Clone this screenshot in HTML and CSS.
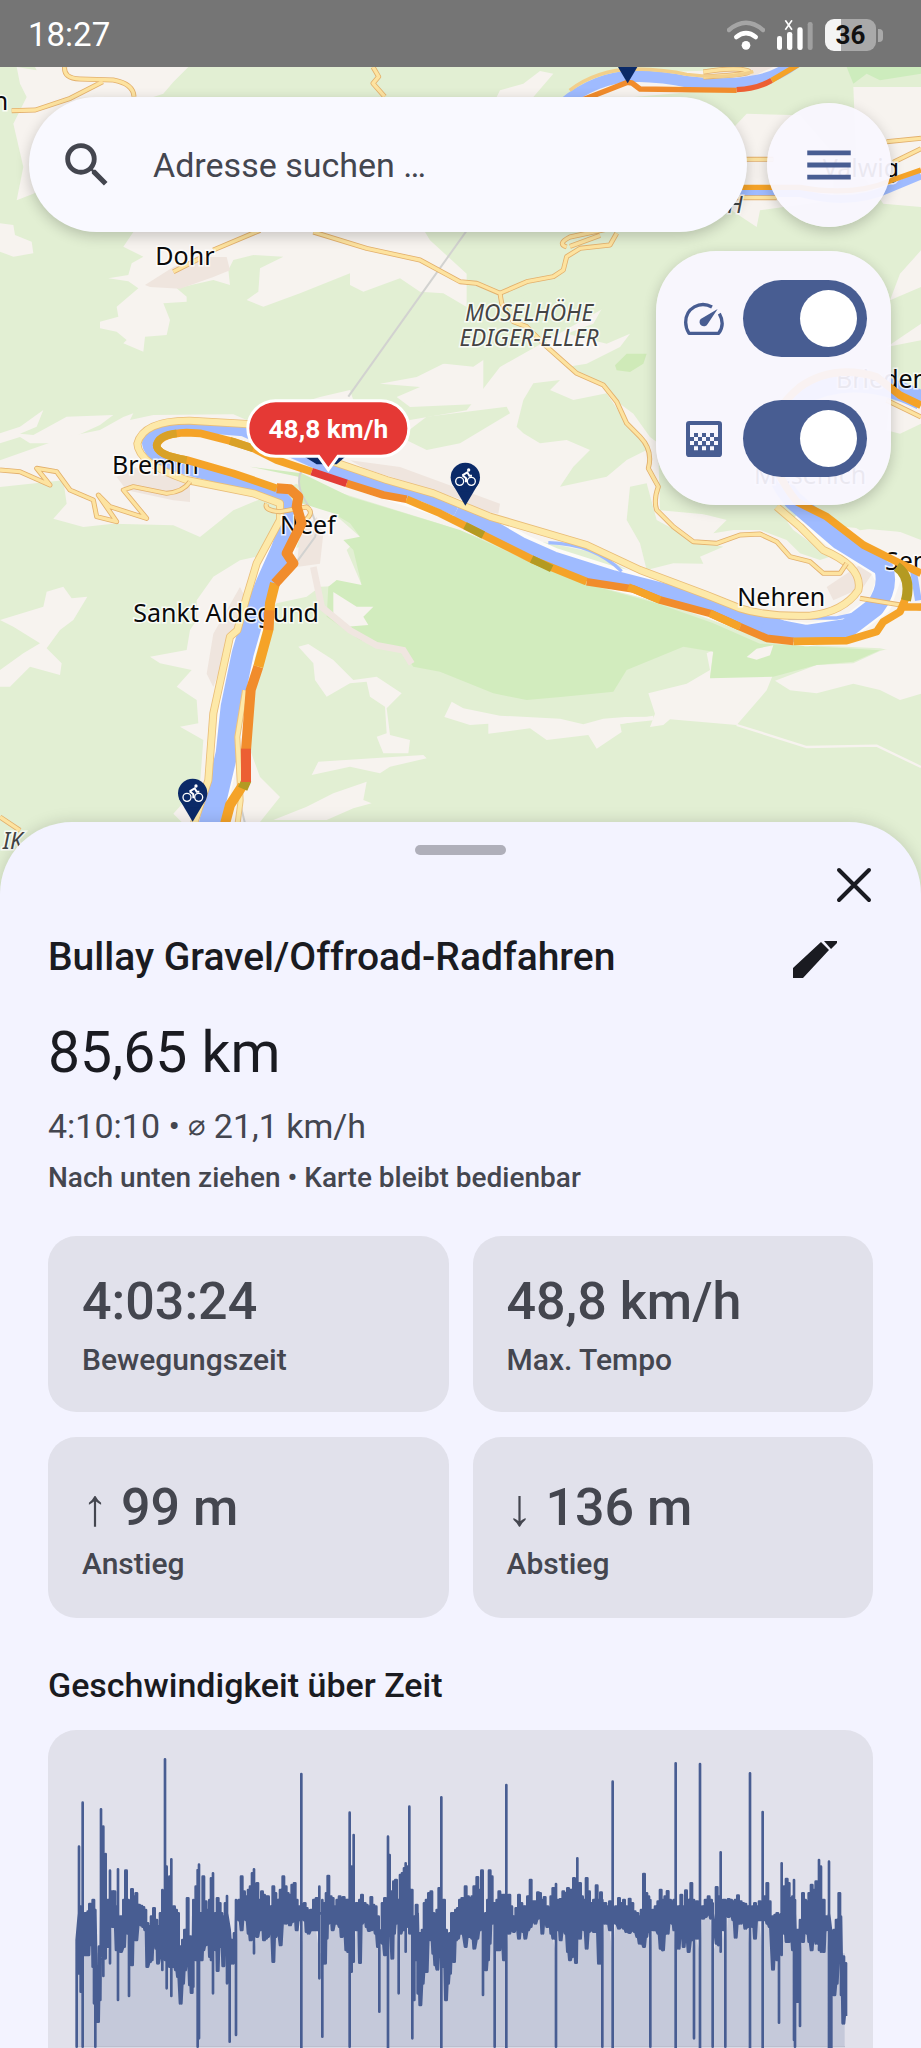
FILE: index.html
```html
<!DOCTYPE html>
<html lang="de">
<head>
  <meta charset="UTF-8" />
  <meta name="viewport" content="width=device-width, initial-scale=1.0"/>
  <title>Bullay Gravel/Offroad-Radfahren</title>
  <link rel="stylesheet" href="styles.css">
</head>
<body>
  <header class="status-bar">
    <span class="clock">18:27</span>
    <div class="status-icons">
      <svg class="wifi" viewBox="0 0 114 90" aria-hidden="true">
        <path d="M6 30Q57-13 108 30" fill="none" stroke="#a5a5a5" stroke-width="13" stroke-linecap="round"/>
        <path d="M28 51Q57 28 86 51" fill="none" stroke="#fff" stroke-width="14" stroke-linecap="round"/>
        <circle cx="57" cy="76" r="13" fill="#fff"/>
      </svg>
      <svg class="signal" viewBox="0 0 108 90" aria-hidden="true">
        <g fill="#fff"><rect x="0" y="48" width="15" height="42" rx="7"/><rect x="30" y="36" width="16" height="54" rx="7"/><rect x="61" y="22" width="16" height="68" rx="7"/></g>
        <rect x="92" y="6" width="15" height="84" rx="7" fill="#a0a0a0"/>
        <path d="M25 1L45 29M45 1L25 29" stroke="#fff" stroke-width="5"/>
      </svg>
      <span class="battery">36</span>
    </div>
  </header>

  <main class="screen">
    <section class="map" aria-label="Karte">
      <svg class="map-canvas" viewBox="0 0 2763 2514" preserveAspectRatio="xMidYMin slice" role="img" aria-label="Karte der Mosel bei Bremm">
        <defs>
          <g id="pin">
            <path d="M-40-68Q-30-50 0 0Q30-50 40-68Z"/>
            <circle cy="-85" r="44"/>
            <g fill="none" stroke="#fff" stroke-width="4">
              <circle cx="-17" cy="-73" r="12"/><circle cx="18" cy="-73" r="12"/>
              <path d="M-9-91L6-100L12-90H20M-9-91L2-82V-70" stroke-width="6"/>
            </g>
            <circle cx="10" cy="-107" r="5" fill="#fff"/>
          </g>
          <path id="main-road" d="M575 2290L625 2140L640 1939L690 1709L712 1690L740 1589L770 1489L840 1359L840 1309L760 1279L560 1239Q415 1190 412 1130Q430 1060 570 1061L740 1071L1000 1184L1160 1239L1300 1279L1470 1349L1760 1434L1920 1509L2120 1584L2220 1624Q2300 1650 2430 1646Q2530 1635 2575 1570Q2590 1500 2470 1449L2400 1379L2330 1319"/>
          <g id="roads">
            <path d="M940 495L1100 544L1260 579L1380 644L1430 649L1500 679L1505 709L1540 764L1580 779L1640 839L1730 919L1810 954L1850 1004L1880 1069L1920 1109Q1960 1150 1945 1204L1975 1259Q1960 1300 1970 1329L2020 1379L2080 1424L2150 1429L2220 1404L2280 1401L2330 1424L2370 1469L2430 1484L2470 1519H2520L2540 1489"/>
            <path d="M1500 679L1580 644L1660 629L1690 609L1700 569L1740 544L1830 534L1850 499M1700 540Q1670 530 1710 510L1850 480M1710 538L1800 505"/>
            <path d="M0 1209L60 1214L150 1254L110 1204L170 1214L210 1269L280 1299L290 1349L350 1364L295 1284L330 1319L440 1354L370 1269L400 1259L500 1279Q550 1275 570 1244"/>
            <path d="M194 0Q190 34 240 36L340 39Q400 50 402 89M308 44L211 94L106 129L35 131"/>
            <path d="M1119 0L1136 29L1119 49L1154 89"/>
            <path d="M640 549L780 490M520 614L600 574"/>
            <path d="M800 1310Q790 1330 840 1334L920 1320Q950 1340 900 1370"/>
            <path d="M2580 1594L2763 1624M2660 1000L2763 1050"/>
            <path d="M2230 277H2320M2660 224L2763 214M2680 286L2763 245M2200 392H2330"/>
            <path d="M2110 15Q2200 0 2240 10T2110 30M0 2250L60 2290"/>
          </g>
        </defs>

        <rect width="2763" height="2514" fill="#e2efd3"/>

        <!-- open fields -->
        <g fill="#f7f3ef">
          <path d="M50 0L110 10L105 0H565L520 45L490 80L460 90L420 140L340 230L100 380L50 400L70 300L40 170L80 90L60 50Z"/>
          <path d="M0 469L40 474L45 504L95 524L100 559L40 569L0 554Z"/>
          <path d="M1460 150L1500 70L1570 50L1620 12L1660 20L1600 90L1510 150Z"/>
          <path d="M1709 89L1790 40L1860 20L2150 10L2300 0H2360L2250 60L1900 90Z"/>
          <path d="M400 495L370 539L430 569L395 589L385 624L325 634L385 643L415 664L350 719L355 749L300 764V784L350 794L380 819L370 829L430 854L435 809L500 804L510 759L490 709L560 704V689L530 664L640 639L690 654L685 609L700 579L760 564L850 569L780 604L775 674L740 699L790 719L900 679L1050 619V654L1090 674L1200 634L1260 674L1330 679L1400 720L1400 620L1290 520L1260 470H420Z"/>
          <path d="M1140 950L1250 930L1330 890L1450 860V1010L1230 1020L1190 990L1260 960Z"/>
          <path d="M0 1099L60 1079L130 1029L110 1079L60 1100L100 1104L200 1049L340 1044L300 1074L180 1129H90L60 1110L0 1129Z"/>
          <path d="M200 1109L300 1089L370 1050L400 1039L390 1059L460 1044L700 1042L740 1059L960 990L1050 969L1060 1000L1230 1059L1400 1030L1500 900L1960 640L1980 1330L2763 1400V1770L2640 1744L2330 1730L2000 1610L1320 1370L900 1240V1440L720 1480L640 1529L590 1600V1660L570 1689L560 1749L450 1769L480 1789L575 1809L530 1859L590 1899L595 1969L540 1979L610 2019L600 2150L520 2240L560 2280L760 2290L840 2190L780 2130L740 2020L720 1700L830 1609L920 1589L960 1559L1085 1554L1040 1449L1080 1409L1000 1339L890 1250L700 1330L600 1410L520 1375L340 1370L250 1380L160 1355L200 1310L190 1240L0 1260V1180Z"/>
          <path d="M0 1659L130 1619L140 1574L190 1559L215 1594L262 1589L220 1659L180 1689L140 1744L185 1789L180 1824L90 1799L30 1859H0V1809L70 1759L120 1729L40 1679Z"/>
          <path d="M895 1739L925 1731L1000 1779L1060 1839L1130 1829L1205 1879L1160 1924L1170 2004L1230 2019L1225 2059L1150 2059L1130 2009L1160 1999L1155 1919L1110 1889L1100 1844L1050 1849L980 1889L945 1839L940 1789Z"/>
          <path d="M935 2124L955 2084L1270 2064L1280 2074L1170 2099L1140 2119L1050 2099Z"/>
          <path d="M820 2259L920 2219L1000 2179L1100 2144L1090 2199L1115 2209L1060 2224L980 2259Z"/>
          <path d="M1333 1950L1355 1904L1390 1924L1500 1946L1680 1955L1750 1972L1810 1955L1875 1950L1960 1949V1960L1860 1970L1865 1995L1790 2045L1765 2004L1640 2019L1590 1984L1465 2000L1465 1970L1410 1974Z"/>
          <path d="M1945 1879L2060 1850L2130 1809L2120 1759L2140 1749L2130 1830L2320 1820L2300 1870L2210 1974L2010 1957L1990 1974L1950 1980L1965 1940Z"/>
          <path d="M2325 1841L2450 1794L2560 1789L2640 1752L2763 1720V1880L2700 1899L2640 1869L2560 1850L2450 1879L2370 1870Z"/>
          <path d="M2060 330L2240 140L2400 145L2500 260V400L2280 430L2270 480L2210 440Z"/>
          <path d="M2560 60H2763V420L2650 410L2570 300Z"/>
          <path d="M2763 550L2700 620L2670 700L2763 660ZM2763 770L2660 840L2763 820Z"/>
          <path d="M2670 1000L2763 1010V1070L2700 1100L2660 1090Z"/>
        </g>
        <path d="M1860 1968L1960 1950M2210 1974L2420 2040L2630 2036L2763 2100" fill="none" stroke="#f7f3ef" stroke-width="7"/>

        <!-- woods between the fields -->
        <g fill="#e2efd3">
          <path d="M1520 699L1640 660L1980 630L1990 1140L1950 1110L1900 1040L1860 1010L1820 960L1740 930L1700 900L1760 890L1860 840L1890 800L1820 830L1700 800L1780 770L1820 700L1720 660L1600 690Z"/>
          <path d="M1300 790L1410 799L1540 859L1480 859L1420 899L1320 889L1250 850Z"/>
          <path d="M1570 999L1600 949L1680 939L1650 969L1720 999L1820 979L1860 1039L1920 1109L1940 1149L1880 1179L1820 1229L1680 1259L1720 1199L1770 1149L1700 1119L1620 1129L1570 1099L1550 1079Z"/>
          <path d="M1280 1049L1520 1019L1530 1039L1380 1129L1280 1149L1200 1110Z"/>
          <path d="M1970 1359L2080 1419L2170 1439L2100 1469L2110 1490L2020 1489L1940 1509L1920 1429L1880 1359L1890 1259L1940 1249Z"/>
          <path d="M2100 1309H2320L2380 1389L2490 1469L2460 1479L2400 1459L2360 1419L2280 1389L2200 1389L2140 1399L2180 1359L2100 1339Z"/>
          <path d="M2450 1314L2763 1110V1419L2660 1379L2580 1390Z"/>
          <path d="M1600 1420L1700 1439L1790 1459L1900 1519L1880 1530L1700 1489Z"/>
        </g>
        <path d="M1845 895L1880 860L1940 860L1930 890L1890 915L1850 910Z" fill="#cfeab8"/>
        <path d="M2540 0H2763V20L2640 40L2600 20L2560 50Z" fill="#cdecbd"/>

        <!-- nature reserve -->
        <path d="M750 1199L905 1219L1050 1289L1380 1389L1600 1489L1750 1549L1970 1609L2140 1669L2280 1730L2380 1735L2640 1750L2560 1784L2450 1794L2320 1829L2130 1834L2140 1754L2050 1739L1880 1809L1840 1874L1690 1889L1580 1899L1480 1879L1320 1814L1240 1799L1210 1759L1080 1719L980 1649L985 1559L1010 1539L1085 1554L1060 1449L1030 1419L1080 1409L1050 1369L1000 1339L905 1309L895 1229Z" fill="#d2ecbe"/>
        <path d="M1000 1575L1070 1619L1120 1619L1090 1649L1105 1674L1040 1679L1000 1640ZM2240 1770L2270 1745L2320 1735L2310 1765L2270 1778Z" fill="#f7f3ef"/>
        <path d="M940 1500L965 1620L1050 1690L1130 1735L1210 1750L1235 1790" fill="none" stroke="#f0e6e0" stroke-width="20"/>

        <!-- built-up areas -->
        <g fill="#efe5de">
          <path d="M435 654L520 600L600 570L680 570L690 610L640 630L540 665L450 660Z"/>
          <path d="M350 1230L400 1200L480 1220L570 1250L570 1305L520 1300L380 1270Z"/>
          <path d="M640 1700L720 1560L740 1600L700 1700L640 1860L620 1820Z"/>
          <path d="M1050 1180L1200 1200L1500 1310L1495 1340L1380 1320L1150 1235Z"/>
          <path d="M2480 1560L2600 1480L2630 1500L2590 1560L2500 1600Z"/>
          <path d="M900 1400L950 1350L970 1400L960 1490L890 1500Z"/>
          <path d="M2110 20L2260 0H2320L2230 40H2120Z"/>
        </g>

        <!-- power line and railway -->
        <g fill="none" stroke="#d2d2d0" stroke-width="6">
          <path d="M1045 989L1440 435"/>
          <path d="M905 1209Q885 1250 915 1300Q960 1370 945 1410L880 1499M718 2200L740 2290"/>
        </g>

        <!-- Mosel -->
        <g fill="none" stroke="#fdfbf8" stroke-linejoin="round">
          <path d="M625 2290L680 2059L695 1919L728 1760L757 1659L800 1550L845 1449L870 1379" stroke-width="78"/>
          <path d="M1010 1214L1120 1250L1370 1330L1565 1435L1660 1477L1840 1534L2000 1575L2170 1628L2320 1690L2420 1703L2540 1685L2640 1610L2665 1540L2640 1495L2520 1420L2400 1330" stroke-width="70"/>
        </g>
        <g fill="none" stroke="#9fbbff" stroke-linejoin="round">
          <path d="M625 2290L680 2059L695 1919L728 1760L757 1659L800 1550L845 1449L870 1379" stroke-width="66"/>
          <path d="M868 1390Q880 1300 830 1284L740 1249L590 1213Q450 1180 445 1129Q450 1070 570 1076L730 1089L900 1165L1010 1214L1120 1250L1270 1285L1370 1330" stroke-width="38"/>
          <path d="M1370 1330L1470 1380L1565 1435L1660 1477L1840 1534L2000 1575L2170 1628L2320 1685" stroke-width="48"/>
          <path d="M2290 1670L2350 1690L2420 1703L2540 1685L2625 1620Q2670 1560 2650 1500L2520 1420L2380 1300Q2240 1130 2400 990Q2560 900 2763 1000" stroke-width="58"/>
          <path d="M1645 1427Q1780 1430 1865 1513M1980 1590L2150 1625M2365 1653H2510L2580 1638" stroke-width="10"/>
          <path d="M2740 1510L2755 1600" stroke-width="20"/>
          <path d="M1690 110Q1790 30 1903 27Q2000 30 2060 44Q2180 60 2273 40Q2330 30 2390-15" stroke-width="34"/>
          <path d="M2200 378H2400Q2550 420 2670 364L2763 325" stroke-width="24"/>
        </g>

        <!-- roads: casing first, then fill -->
        <g fill="none" stroke-linejoin="round">
          <use href="#main-road" stroke="#e9bd78" stroke-width="24"/>
          <use href="#main-road" stroke="#fde9a9" stroke-width="19"/>
          <path d="M710 2290L722 2200L712 2010L735 1870" stroke="#edc27d" stroke-width="18"/>
          <path d="M710 2290L722 2200L712 2010L735 1870" stroke="#fde9a9" stroke-width="12"/>
          <use href="#roads" stroke="#e3b06c" stroke-width="15"/>
          <use href="#roads" stroke="#fde3a0" stroke-width="10"/>
          <path d="M1709 70Q1790 8 1903 6Q2000 8 2060 22Q2180 38 2260 14" stroke="#f2cf8b" stroke-width="10"/>
        </g>

        <g class="place">
          <text x="-22" y="128">h</text>
          <text x="466" y="594">Dohr</text>
          <text x="336" y="1220">Bremm</text>
          <text x="840" y="1402">Neef</text>
          <text x="400" y="1664">Sankt Aldegund</text>
          <text x="2212" y="1617">Nehren</text>
          <text x="2655" y="1510">Senheim</text>
          <text x="2508" y="963">Brieden</text>
          <text x="2262" y="1250">Mesenich</text>
          <text x="2468" y="330">Valwig</text>
        </g>
        <g class="area">
          <text x="1587" y="762" text-anchor="middle">MOSELHÖHE</text>
          <text x="1587" y="838" text-anchor="middle">EDIGER-ELLER</text>
          <text x="2182" y="437">H</text>
          <text x="8" y="2346">IK</text>
        </g>

        <!-- recorded track, coloured by speed -->
        <g class="track">
          <path class="mid wide" d="M670 2290L690 2214L728 2155"/>
          <path class="fast wide" d="M738 2050L745 1959L752 1869L775 1799"/>
          <path class="mid wide" d="M775 1799L805 1689L810 1609L825 1549"/>
          <path class="fast wide" d="M805 1689L808 1630M825 1549L880 1489L860 1459L905 1369L890 1319L895 1289L870 1267L830 1264"/>
          <path class="mid" d="M830 1264L700 1219L560 1179Q470 1165 470 1135Q480 1100 560 1097L600 1099L700 1124L760 1144L830 1179L935 1214"/>
          <path class="slow" d="M560 1179Q470 1165 470 1135Q475 1105 530 1099M690 1122L760 1144"/>
          <path class="fast" d="M1040 1249L1150 1284L1220 1297"/>
          <path class="mid" d="M1220 1297L1320 1339L1400 1379L1600 1479L1760 1544"/>
          <path class="fast" d="M1760 1544L1900 1566L1980 1599L2130 1639L2220 1679"/>
          <path class="mid" d="M1885 1560L1980 1599M2130 1639L2220 1679"/>
          <path class="fast" d="M2220 1679L2300 1714L2380 1723"/>
          <path class="mid" d="M2380 1723L2540 1721L2630 1694L2650 1664L2700 1634L2725 1575M2700 1620H2763M2763 1519L2690 1484L2590 1434L2480 1349L2390 1304Q2230 1100 2400 960Q2500 890 2630 930L2700 985L2763 1015"/>
          <path class="olive" d="M1395 1376L1450 1404M1595 1476L1655 1505"/>
          <path class="olive wide" d="M728 2165L740 2138M2718 1600Q2735 1530 2690 1499"/>
          <path class="red wide" d="M738 2145V2045"/>
          <path class="max" d="M935 1214L1040 1249"/>
          <path class="fast thin" d="M1745 100L1883 46L1896 48L1920 66L2210 70"/>
          <path class="red thin" d="M2210 68Q2270 66 2315 40"/>
          <path class="mid thin" d="M2315 40L2400-10M2200 361H2400Q2560 390 2675 340L2763 309"/>
        </g>

        <g fill="#0b2a68">
          <use href="#pin" x="1396" y="1316"/>
          <use href="#pin" x="578" y="2264"/>
          <use href="#pin" x="1883" y="49"/>
          <path d="M915 1170H1035L1010 1192H950Z"/>
        </g>

        <!-- top speed callout -->
        <path d="M827 1001H1143A83 83 0 0 1 1143 1168H1014L985 1208L956 1168H827A83 83 0 0 1 827 1001Z" fill="#e53935" stroke="#fff" stroke-width="9"/>
        <text class="speed" x="985" y="1112" text-anchor="middle">48,8 km/h</text>
      </svg>

      <div class="map-controls">
        <div class="top-row">
          <form class="search" role="search">
            <svg viewBox="0 0 24 24" aria-hidden="true"><path d="M15.5 14h-.79l-.28-.27A6.47 6.47 0 0 0 16 9.5 6.5 6.5 0 1 0 9.5 16c1.61 0 3.09-.59 4.23-1.57l.27.28v.79l5 4.99L20.49 19l-4.99-5zm-6 0C7.01 14 5 11.99 5 9.5S7.01 5 9.5 5 14 7.01 14 9.5 11.99 14 9.5 14z"/></svg>
            <input type="search" placeholder="Adresse suchen …" aria-label="Adresse suchen">
          </form>
          <button class="menu-button" type="button" aria-label="Menü">
            <svg viewBox="0 0 24 24" aria-hidden="true"><path d="M3 6h18v2H3zM3 11h18v2H3zM3 16h18v2H3z"/></svg>
          </button>
        </div>
        <div class="layer-panel">
          <label class="layer">
            <svg viewBox="0 0 120 120" role="img" aria-label="Geschwindigkeit">
              <path d="M84 24C48 4 5 28 5 70Q5 88 15 103H104Q124 76 106 44" fill="none" stroke="currentColor" stroke-width="10" stroke-linejoin="round"/>
              <path d="M101 30L71 75A13 13 0 1 1 50 60Z"/>
            </svg>
            <input type="checkbox" role="switch" checked>
          </label>
          <label class="layer">
            <svg viewBox="0 0 120 120" role="img" aria-label="Deckkraft">
              <path fill-rule="evenodd" d="M16 6H104Q114 6 114 16V104Q114 114 104 114H16Q6 114 6 104V16Q6 6 16 6ZM18 18V54H30V42H42V54H54V42H66V54H78V42H90V54H102V18Z"/>
              <path d="M30 54h12v12H30zM54 54h12v12H54zM78 54h12v12H78zM18 66h12v12H18zM42 66h12v12H42zM66 66h12v12H66zM90 66h12v12H90zM30 82h12v12H30zM54 82h12v12H54zM78 82h12v12H78z" fill="#f8f6fd"/>
            </svg>
            <input type="checkbox" role="switch" checked>
          </label>
        </div>
      </div>
    </section>

    <section class="sheet">
      <div class="handle"></div>
      <div class="sheet-actions">
        <button class="icon-button" type="button" aria-label="Schließen">
          <svg viewBox="0 0 60 60" aria-hidden="true"><path d="M15 15L45 45M45 15L15 45" stroke="currentColor" stroke-width="4" stroke-linecap="round"/></svg>
        </button>
      </div>

      <div class="title-row">
        <h1>Bullay Gravel/Offroad-Radfahren</h1>
        <button class="icon-button" type="button" aria-label="Bearbeiten">
          <svg viewBox="0 0 60 60" aria-hidden="true"><path d="M8 51V41L36 15L44 23L18 51ZM39 14H52V16L46 22Z"/></svg>
        </button>
      </div>

      <p class="distance">85,65 km</p>
      <p class="summary">4:10:10 • <span class="avg">⌀</span> 21,1 km/h</p>
      <p class="hint">Nach unten ziehen • Karte bleibt bedienbar</p>

      <div class="stats">
        <div class="stat">
          <strong>4:03:24</strong>
          <span>Bewegungszeit</span>
        </div>
        <div class="stat">
          <strong>48,8 km/h</strong>
          <span>Max. Tempo</span>
        </div>
        <div class="stat climb">
          <strong><i class="arrow">↑</i> 99 m</strong>
          <span>Anstieg</span>
        </div>
        <div class="stat climb">
          <strong><i class="arrow">↓</i> 136 m</strong>
          <span>Abstieg</span>
        </div>
      </div>

      <h2>Geschwindigkeit über Zeit</h2>
      <div class="chart-card">
        <svg class="chart" viewBox="108 174 2307 930" role="img" aria-label="Geschwindigkeit über Zeit">
          <path id="chartArea" class="chart-area" d=""/>
          <path class="chart-axis" d="M108 1040H2415"/>
          <path id="chartLine" class="chart-line" d=""/>
        </svg>
      </div>
    </section>
  </main>

  <script src="chart.js"></script>
</body>
</html>
```
FILE: styles.css
```css
* {
  box-sizing: border-box;
}

body {
  margin: 0;
  height: 100vh;
  display: flex;
  flex-direction: column;
  overflow: hidden;
  font-family: Roboto, sans-serif;
  background-color: #f3f3ff;
  color: #1a1b21;
}

button {
  border: none;
  padding: 0;
  background: none;
  color: inherit;
  cursor: pointer;
}

svg {
  display: block;
  fill: currentColor;
}

h1, h2, p {
  margin: 0;
}

/* status bar */
.status-bar {
  flex: none;
  height: 67px;
  padding: 2px 45px 0 28px;
  display: flex;
  justify-content: space-between;
  align-items: center;
  background-color: #757575;
  color: #fff;
}

.clock {
  font-size: 33px;
}

.status-icons {
  display: flex;
  align-items: center;
  gap: 12px;
}

.wifi {
  width: 38px;
  height: 30px;
}

.signal {
  width: 36px;
  height: 30px;
}

.battery {
  position: relative;
  width: 51px;
  height: 32px;
  border-radius: 9px;
  background: linear-gradient(90deg, #f4f4f4 16px, #a9a9a9 16px);
  color: #111;
  font-size: 26px;
  font-weight: 700;
  line-height: 33px;
  text-align: center;
}

.battery::after {
  content: "";
  position: absolute;
  left: 53px;
  top: 10px;
  width: 5px;
  height: 13px;
  border-radius: 0 4px 4px 0;
  background-color: #a9a9a9;
}

.screen {
  flex: 1;
  min-height: 0;
  display: flex;
  flex-direction: column;
}

/* map */
.map {
  position: relative;
  flex: none;
  height: 838px;
  overflow: hidden;
}

.map-canvas {
  width: 100%;
  height: 100%;
}

.place text, .area text {
  font-family: "Noto Sans", sans-serif;
  font-size: 75px;
  fill: #0a0a0a;
  stroke: #fff;
  stroke-opacity: 0.8;
  stroke-width: 9;
  paint-order: stroke;
}

.area text {
  font-size: 68px;
  font-style: italic;
  fill: #444;
}

.track path {
  fill: none;
  stroke-width: 23;
  stroke-linejoin: round;
}

.track .wide {
  stroke-width: 30;
}

.track .thin {
  stroke-width: 16;
}

.track .slow { stroke: #d9a127; }
.track .mid { stroke: #f5a328; }
.track .fast { stroke: #f18c2c; }
.track .red { stroke: #ec5f33; }
.track .max { stroke: #e23c36; }
.track .olive { stroke: #b49a22; }

.speed {
  font-size: 79px;
  font-weight: 700;
  fill: #fff;
}

.map-controls {
  position: absolute;
  top: 30px;
  left: 29px;
  right: 30px;
  display: flex;
  flex-direction: column;
  gap: 19px;
}

.top-row {
  display: flex;
  align-items: center;
  gap: 20px;
}

.search {
  flex: 1;
  min-width: 0;
  height: 135px;
  padding: 0 40px 0 29px;
  display: flex;
  align-items: center;
  gap: 37px;
  border-radius: 68px;
  background-color: #f9f9ff;
  box-shadow: 0 4px 14px rgba(0, 0, 0, 0.2);
  color: #44464f;
}

.search svg {
  flex: none;
  width: 58px;
  height: 58px;
}

.search input {
  flex: 1;
  min-width: 0;
  padding: 0;
  border: none;
  outline: none;
  background: none;
  font: inherit;
  font-size: 34px;
  color: inherit;
}

.search input::placeholder {
  color: inherit;
  opacity: 1;
}

.menu-button {
  flex: none;
  width: 124px;
  height: 124px;
  display: flex;
  align-items: center;
  justify-content: center;
  border-radius: 50%;
  background-color: rgba(249, 247, 255, 0.94);
  box-shadow: 0 4px 14px rgba(0, 0, 0, 0.2);
  color: #485d92;
}

.menu-button svg {
  width: 58px;
  height: 58px;
}

.layer-panel {
  align-self: flex-end;
  padding: 29px 24px 28px 28px;
  display: flex;
  flex-direction: column;
  gap: 43px;
  border-radius: 60px;
  background-color: rgba(249, 247, 255, 0.94);
  box-shadow: 0 4px 14px rgba(0, 0, 0, 0.2);
}

.layer {
  display: flex;
  align-items: center;
  gap: 19px;
  color: #485d92;
  cursor: pointer;
}

.layer svg {
  width: 40px;
  height: 40px;
}

.layer input {
  appearance: none;
  width: 124px;
  height: 77px;
  margin: 0;
  padding: 0 10px;
  display: flex;
  align-items: center;
  border-radius: 39px;
  background-color: #a9acb8;
}

.layer input::before {
  content: "";
  width: 57px;
  height: 57px;
  border-radius: 50%;
  background-color: #fff;
}

.layer input:checked {
  justify-content: flex-end;
  background-color: #485d92;
}

/* bottom sheet */
.sheet {
  position: relative;
  flex: 1;
  min-height: 0;
  margin-top: -83px;
  padding: 23px 48px 0;
  overflow: hidden;
  border-radius: 72px 72px 0 0;
  background-color: #f3f3ff;
  box-shadow: 0 0 16px rgba(0, 0, 0, 0.15);
}

.handle {
  width: 91px;
  height: 10px;
  margin: 0 auto;
  border-radius: 5px;
  background-color: #afafba;
}

.icon-button {
  flex: none;
  width: 60px;
  height: 60px;
}

.sheet-actions {
  display: flex;
  justify-content: flex-end;
  margin-right: -11px;
}

.title-row {
  display: flex;
  align-items: center;
  justify-content: space-between;
  margin-top: 12px;
  padding-right: 28px;
}

h1 {
  font-size: 39px;
  font-weight: 500;
}

.distance {
  margin-top: 32px;
  font-size: 57px;
  line-height: 68px;
}

.summary {
  margin-top: 17px;
  font-size: 34px;
  line-height: 44px;
  color: #44464f;
}

.avg {
  font-size: 29px;
  line-height: 1;
  vertical-align: 3px;
}

.hint {
  margin-top: 13px;
  font-size: 28px;
  font-weight: 500;
  line-height: 34px;
  color: #44464f;
}

.stats {
  display: grid;
  grid-template-columns: 1fr 1fr;
  gap: 25px 24px;
  margin-top: 41px;
}

.stat {
  padding: 36px 34px 32px;
  display: flex;
  flex-direction: column;
  gap: 8px;
  border-radius: 28px;
  background-color: #e1e1eb;
  color: #44464f;
}

.stat strong {
  font-size: 52px;
  font-weight: 500;
  line-height: 60px;
}

.stat span {
  font-size: 30px;
  font-weight: 500;
  line-height: 40px;
}

.climb {
  padding: 38px 34px 34px;
  gap: 4px;
}

.climb strong {
  line-height: 64px;
}

.arrow {
  font-family: "Liberation Sans", sans-serif;
  font-style: normal;
}

h2 {
  margin-top: 45px;
  font-size: 34px;
  font-weight: 500;
  line-height: 44px;
}

.chart-card {
  margin-top: 23px;
  padding: 28px;
  border-radius: 28px;
  background-color: #e1e1eb;
}

.chart {
  width: 100%;
  overflow: visible;
}

.chart-area {
  fill: #485d92;
  fill-opacity: 0.18;
}

.chart-axis {
  fill: none;
  stroke: #b9bccb;
  stroke-width: 3;
}

.chart-line {
  fill: none;
  stroke: #485d92;
  stroke-width: 8;
  stroke-linejoin: round;
}
```
FILE: chart.js
```js
// each sample: x, top, bottom of the speed swing in chart units
const left = `110 720 1040,117 440 820,122 620 875,128 308 1040,134 640 765,143 635 765,148 612 735,153 625 725,158 600 800,162 632 910,166 630 1040,172 800 965,177 740 900,183 328 770,190 380 828,197 462 775,203 600 740,210 512 790,216 575 680,221 575 660,228 620 750,234 508 900,241 650 755,250 600 740,256 512 690,262 600 700,267 610 888,274 568 795,280 590 690,287 580 720,295 615 670,302 618 675,308 622 680,314 630 690,320 670 800,328 680 785,333 650 780,340 625 710,347 660 745,352 680 790,360 640 770,367 570 810,375 178 780,380 500 865,388 530 800,394 478 888,400 620 800,406 630 810,412 640 830,420 740 910,427 720 850,433 690 810,441 595 770,448 710 855,453 720 878,460 600 860,467 560 780,473 510 1040,477 494 1015,483 640 780,488 530 750,495 605 735,502 630 715,508 600 770,513 535 780,519 520 880,526 640 750,531 595 812,537 610 740,542 640 740,548 650 798,555 610 700,561 588 850,569 690 1025,576 720 790,582 700 785,588 600 1005,596 600 660,603 530 690,610 575 640,617 590 660,624 570 700,630 560 720,636 520 715,642 508 760,650 550 710,657 600 690,664 575 680,670 585 720,676 590 715,682 590 710,690 620 680,698 560 785,704 580 710,712 600 700,720 570 735,728 530 665,735 560 670,741 580 665,748 585 675,755 555 665,762 550 660,768 600 690,775 620 660,784 222 1044,792 610 660,798 625 695,804 632 700,812 630 690,820 600 690,828 595 690,838 560 835,847 600 1010,853 610 790,858 580 715,863 528 670,870 590 660,876 595 690,884 620 670,890 600 670,897 590 680,903 600 710,909 592 670,917 600 750,923 600 755,929 338 1040,935 500 815,941 405 785,948 610 690,952 615 680,958 600 788,964 585 670,972 610 660,978 615 680,985 620 692,992 592 690,998 615 680,1005 620 700,1012 650 740,1018 690 935,1026 610 730,1033 595 765,1044 410 1044,1049 465 700,1055 575 775,1060 545 700,1066 540 670,1076 600 880,1080 525 700,1086 520 690,1092 505 690,1097 490 755,1103 500 680,1108 320 700,1113 570 700,1117 680 1015,1123 650 900,1128 615 780,1133 640 880,1139 700 915,1146 690 850,1152 610 815,1158 600 815,1165 580 710,1172 575 720,1178 640 760,1184 650 795,1190 630 808,1196 565 770,1204 292 1044,1210 600 800,1216 690 900,1222 740 850,1228 700 820,1234 640 760,1240 640 785,1246 630 720,1252 625 715,1258 600 700`;
const right = `5 595 700,15 560 740,22 590 710,28 595 710,35 590 715,41 560 745,50 532 715,57 570 690,64 512 660,69 640 885,76 640 810,82 600 780,87 512 730,93 530 670,98 610 670,104 610 1040,110 600 750,116 575 750,122 585 700,130 585 780,139 255 1044,146 585 700,152 620 690,160 650 695,167 625 675,175 585 715,182 610 680,188 620 695,194 620 715,202 590 690,210 540 680,217 605 655,224 605 670,232 578 655,238 580 640,245 600 700,252 592 660,260 620 680,266 625 670,272 590 700,278 565 715,288 552 1040,294 600 690,300 598 720,308 575 680,315 580 700,322 565 755,328 570 780,334 570 770,340 535 740,346 560 788,352 475 710,358 550 715,364 590 670,371 600 690,378 535 745,385 575 695,392 610 690,400 600 695,408 557 695,415 600 790,421 578 790,427 600 1040,434 610 670,441 620 670,448 605 690,458 245 1044,466 620 670,475 595 685,482 610 680,490 600 685,497 620 695,507 597 698,515 610 690,522 635 695,530 640 710,537 650 730,543 630 730,550 522 740,557 580 710,563 590 695,571 600 1040,578 630 690,585 620 690,593 605 700,600 570 745,607 600 750,614 590 700,621 574 700,628 600 660,635 605 670,641 600 690,647 190 1044,654 620 745,662 585 680,669 620 740,676 572 700,684 600 755,692 550 720,702 600 1015,709 605 715,720 192 1044,727 620 655,735 600 650,744 590 640,751 600 655,758 610 1040,768 562 730,775 590 735,782 457 755,789 600 690,796 600 1040,804 598 650,811 600 645,818 605 660,825 600 712,832 587 670,840 605 670,847 610 660,854 612 685,862 620 680,870 220 1044,877 620 680,883 610 715,890 620 660,897 605 660,908 336 1044,914 590 660,920 550 670,927 605 680,937 650 808,944 645 740,950 640 780,957 650 968,965 490 765,972 560 700,978 537 725,984 550 725,990 595 700,997 590 750,1002 540 1020,1005 600 1040,1012 690 905,1020 660 978,1027 580 725,1033 600 690,1040 605 700,1046 580 725,1053 555 750,1060 570 700,1067 545 730,1077 480 750,1083 500 755,1089 600 755,1096 650 690,1107 485 1044,1114 700 1044,1121 690 885,1128 660 850,1136 580 770,1143 650 885,1148 770 970,1154 790 948`;

// the curve rests around this level between two swings
const cruise = 640;
// swings taller than this are drawn as a straight spike
const spike = 230;

function parse(text, offset) {
  return text.split(',').map(row => {
    const [x, top, bottom] = row.split(' ').map(Number);
    const rest = Math.min(Math.max(cruise, top), bottom);
    return { x: x + offset, top, bottom, rest };
  });
}

function swing(s) {
  if (s.bottom - s.top > spike) {
    return `${s.x} ${s.rest}V${s.top}V${s.bottom}V${s.rest}`;
  }
  return `${s.x} ${s.bottom}V${s.top}H${s.x + 4}V${s.bottom}`;
}

const samples = parse(left, 0).concat(parse(right, 1260));
const points = samples.map(swing).join('L');

// the area follows the lower edge only
const floor = samples.map(s => `${s.x} ${Math.min(s.bottom, 760)}`).join('L');

document.getElementById('chartLine').setAttribute('d', 'M' + points);
document.getElementById('chartArea').setAttribute('d', `M110 1040L${floor}L2414 1040Z`);
```
